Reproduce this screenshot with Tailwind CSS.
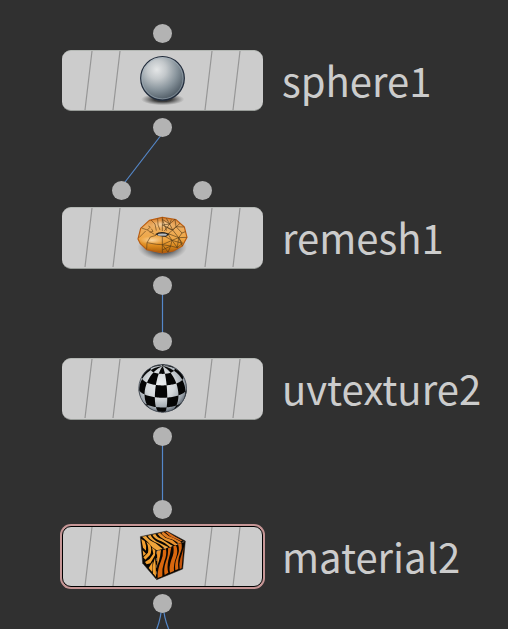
<!DOCTYPE html>
<html lang="en">
<head>
  <meta charset="UTF-8">
  <meta name="viewport" content="width=device-width, initial-scale=1.0">
  <title>Network Editor</title>
  <script src="https://cdn.jsdelivr.net/npm/@tailwindcss/browser@4"></script>
</head>
<body class="bg-[#303030] font-['Noto_Sans_CJK_SC','Noto_Sans',sans-serif] text-[#cccccc]">

  <!-- Shared node body stripes -->
  <svg class="hidden">
    <symbol id="stripes" viewBox="0 0 201 62">
      <path d="M30 1L23 60M58 1L51 60M150 1L143 60M178 1L171 60" fill="none" stroke="#969696" stroke-width="1.2"/>
    </symbol>
  </svg>

  <main class="relative min-h-screen overflow-hidden">

    <!-- Wires -->
    <svg class="absolute inset-0 h-full w-full" fill="none" stroke="#5487c9" stroke-width="1.2">
      <path d="M162 134L122 186"/>
      <path d="M162.5 285V342"/>
      <path d="M162.5 436V510"/>
      <path d="M162 604Q161 619 156 631M163 604Q164 619 169.500 631"/>
    </svg>

    <!-- sphere1 -->
    <section class="absolute left-[62px] top-[50px] flex items-start gap-[19px]">
      <span class="absolute -top-[26px] left-[91px] size-[19px] rounded-full bg-[#b3b3b3]"></span>
      <div class="relative flex h-[61px] w-[201px] justify-center rounded-[9px] border-y border-t-[#b4b8b4] border-b-[#989c98] bg-[#cccccc]">
        <svg class="absolute inset-x-0 -top-px h-[62px] w-full"><use href="#stripes"/></svg>
        <svg class="relative -top-px h-[62px] w-[65px]" viewBox="0 15 195 186">
          <defs>
            <radialGradient id="ballShade" cx=".37" cy=".3" r=".72">
              <stop offset="0" stop-color="#e4e6e7"/>
              <stop offset=".3" stop-color="#c3c8cb"/>
              <stop offset=".65" stop-color="#87939b"/>
              <stop offset="1" stop-color="#4d5963"/>
            </radialGradient>
            <radialGradient id="ballShadow">
              <stop offset=".4" stop-color="#333" stop-opacity=".95"/>
              <stop offset="1" stop-color="#555" stop-opacity="0"/>
            </radialGradient>
          </defs>
          <ellipse cx="98" cy="163" rx="65" ry="18" fill="url(#ballShadow)"/>
          <circle cx="97.500" cy="100" r="65.500" fill="url(#ballShade)" stroke="#202b3b" stroke-width="3.500"/>
          <circle cx="97.500" cy="100" r="61.500" fill="none" stroke="#a5b4c0" stroke-width="3" opacity=".5"/>
        </svg>
      </div>
      <span class="absolute -bottom-[26px] left-[91px] size-[19px] rounded-full bg-[#b3b3b3]"></span>
      <h2 class="text-[40px] leading-[60px]">sphere1</h2>
    </section>

    <!-- remesh1 -->
    <section class="absolute left-[62px] top-[207px] flex items-start gap-[19px]">
      <span class="absolute -top-[26px] left-[50px] size-[19px] rounded-full bg-[#b3b3b3]"></span>
      <span class="absolute -top-[26px] left-[131px] size-[19px] rounded-full bg-[#b3b3b3]"></span>
      <div class="relative flex h-[62px] w-[201px] justify-center rounded-[9px] border-y border-t-[#b4b8b4] border-b-[#989c98] bg-[#cccccc]">
        <svg class="absolute inset-x-0 -top-px h-[62px] w-full"><use href="#stripes"/></svg>
        <svg class="relative -top-px h-[62px] w-[65px]" viewBox="0 6 195 186">
          <defs>
            <linearGradient id="dough" x1="0" y1="0" x2="0" y2="1">
              <stop offset="0" stop-color="#d98434"/>
              <stop offset=".25" stop-color="#ecae62"/>
              <stop offset=".6" stop-color="#efa746"/>
              <stop offset=".8" stop-color="#dc8a1e"/>
              <stop offset="1" stop-color="#a85a06"/>
            </linearGradient>
            <radialGradient id="glaze">
              <stop offset="0" stop-color="#ffe9c4" stop-opacity=".75"/>
              <stop offset="1" stop-color="#ffe0b0" stop-opacity="0"/>
            </radialGradient>
            <radialGradient id="doughShadow">
              <stop offset=".5" stop-color="#505357" stop-opacity=".9"/>
              <stop offset="1" stop-color="#777" stop-opacity="0"/>
            </radialGradient>
          </defs>
          <ellipse cx="97" cy="126" rx="74" ry="40" fill="url(#doughShadow)"/>
          <path d="M24 102L32 70L58 46L97 37L138 44L163 66L171 97L157 123L130 138L97 144L50 134L31 116Z" fill="url(#dough)" stroke="#b95d12" stroke-width="3.500" stroke-linejoin="round"/>
          <ellipse cx="98" cy="58" rx="34" ry="12" fill="url(#glaze)"/>
          <ellipse cx="66" cy="106" rx="36" ry="13" fill="url(#glaze)"/>
          <!-- quads, left half -->
          <path d="M63 45L75 57L79 77M83 41L84 60L90 75M35 69L52 75L73 88M52 75L61 66L55 63M59 82L69 79L64 71M27 98L47 78M50 133L51 113L61 96L78 91M51 113L80 118L97 119" fill="none" stroke="#5a3a14" stroke-width="1.800"/>
          <!-- triangles, right half -->
          <path d="M97 37V78M97 94V144M97 43L119 57L135 43M97 60L119 57L109 40M119 57L128 75L150 55M97 43L110 77M97 60L128 75L115 86M119 57L103 78M135 43L138 65L161 66M128 75L138 65L156 84L166 80M128 75L146 98L156 84M115 86L146 98L170 97M115 89L126 106L146 98L157 123M105 94L126 106L97 119M97 119L122 123L126 106L142 128L146 98M97 135L122 123L114 142M97 119L114 141M122 123L142 128L157 115L146 98M126 106L157 115M119 57L124 44M128 75L119 72L109 66" fill="none" stroke="#543a18" stroke-width="1.900"/>
          <path d="M75 88Q87 79 104 82L119 87L108 95Q88 97 75 88Z" fill="#24211c"/>
          <ellipse cx="97" cy="89" rx="14" ry="3.500" fill="#b7bcc0"/>
        </svg>
      </div>
      <span class="absolute -bottom-[26px] left-[91px] size-[19px] rounded-full bg-[#b3b3b3]"></span>
      <h2 class="text-[40px] leading-[60px]">remesh1</h2>
    </section>

    <!-- uvtexture2 -->
    <section class="absolute left-[62px] top-[358px] flex items-start gap-[19px]">
      <span class="absolute -top-[26px] left-[91px] size-[19px] rounded-full bg-[#b3b3b3]"></span>
      <div class="relative flex h-[62px] w-[201px] justify-center rounded-[9px] border-y border-t-[#b4b8b4] border-b-[#989c98] bg-[#cccccc]">
        <svg class="absolute inset-x-0 -top-px h-[62px] w-full"><use href="#stripes"/></svg>
        <svg class="relative -top-px h-[62px] w-[65px]" viewBox="0 9 195 186">
          <defs>
            <radialGradient id="checkShade" cx=".45" cy=".42" r=".6">
              <stop offset="0" stop-color="#eceef0"/>
              <stop offset=".5" stop-color="#d3d7da"/>
              <stop offset=".85" stop-color="#9aa2aa"/>
              <stop offset="1" stop-color="#555f69"/>
            </radialGradient>
          </defs>
          <circle cx="98" cy="100" r="72" fill="url(#checkShade)"/>
          <path id="checks" fill="#050505"/>
          <circle cx="98" cy="100" r="71.500" fill="none" stroke="#3d454e" stroke-width="2.500"/>
        </svg>
      </div>
      <span class="absolute -bottom-[26px] left-[91px] size-[19px] rounded-full bg-[#b3b3b3]"></span>
      <h2 class="text-[40px] leading-[60px]">uvtexture2</h2>
    </section>

    <!-- material2 (selected) -->
    <section class="absolute left-[62px] top-[526px] flex items-start gap-[19px]">
      <span class="absolute -top-[26px] left-[91px] size-[19px] rounded-full bg-[#b3b3b3]"></span>
      <div class="relative flex h-[61px] w-[201px] justify-center rounded-[9px] border border-black bg-[#cccccc] ring-2 ring-[#c69696]">
        <svg class="absolute -left-px -top-px h-[62px] w-[201px]"><use href="#stripes"/></svg>
        <svg class="relative -top-px h-[62px] w-[65px]" viewBox="0 18 195 186">
          <path d="M31 50L110 33L166 63L158 147L80 179L38 130Z" fill="#090603" stroke="#282018" stroke-width="1.500"/>
          <!-- top face -->
          <g fill="#efa43a">
            <path d="M36 50L48 48Q58 62 77 70L98 87L80 91L67 82Q56 66 36 50Z"/>
            <path d="M53 47L62 45Q68 60 88 68L116 82L105 86Q88 70 74 66Q58 57 53 47Z"/>
            <path d="M67 44L76 42Q82 54 95 57L110 67L128 78L120 81Q105 68 94 64Q73 56 67 44Z"/>
            <path d="M82 41L90 39L106 53L128 61L143 74L134 76Q120 66 106 61Q90 53 82 41Z" fill="#e8902d"/>
            <path d="M94 38L101 36Q114 49 130 53L155 67L147 71Q131 58 118 56Q100 50 94 38Z" fill="#e17d22"/>
            <path d="M105 35L112 35L136 50L158 62L152 63Q132 54 120 49Z" fill="#d96c1c"/>
          </g>
          <!-- left face -->
          <g fill="#f3a030">
            <path d="M34 57L44 63Q50 77 48 92L39 83Z"/>
            <path d="M49 65L61 75Q67 92 60 105L46 119L40 112L54 98Q57 82 49 65Z"/>
            <path d="M38 91L48 101L40 108Z"/>
            <path d="M66 82L76 91L75 106L61 130L50 133L45 126L59 117L70 101Z"/>
            <path d="M75 114L77 134L78 171L69 160Q64 143 75 114Z"/>
            <path d="M68 125L66 155L56 144Z"/>
          </g>
          <!-- right face -->
          <g fill="#d9670e">
            <path d="M81 94L93 90Q91 108 87 122L82 137Z" fill="#f0942a"/>
            <path d="M99 91L108 87Q111 104 103 124Q95 147 97 169L83 174Q82 147 93 123Q100 107 99 91Z"/>
            <path d="M114 85L124 81Q121 101 115 121Q110 145 115 158L104 165Q100 149 107 127Q116 104 114 85Z"/>
            <path d="M130 79L138 76Q145 92 139 110Q130 133 132 153L120 158Q116 142 124 119Q134 98 130 79Z"/>
            <path d="M144 73L154 69Q158 82 151 98Q142 120 145 147L136 151Q133 132 141 112Q151 91 144 73Z"/>
            <path d="M161 80L158 110L155 145L149 147Q146 133 151 116Q157 98 161 80Z" fill="#c6540a"/>
          </g>
          <path d="M80 94V176M81 93L163 65" stroke="#f7c795" stroke-width="1.500" stroke-dasharray="9 11" fill="none"/>
        </svg>
      </div>
      <span class="absolute -bottom-[26px] left-[91px] size-[19px] rounded-full bg-[#b3b3b3]"></span>
      <h2 class="text-[40px] leading-[60px]">material2</h2>
    </section>
  </main>

  <script>
    // Checkered ball: 30 degree cells, pole tilted towards the viewer
    const rad = Math.PI / 180;
    const tilt = 23 * rad;

    function project(lat, lon) {
      const x = Math.cos(lat * rad) * Math.sin(lon * rad);
      const y = Math.sin(lat * rad);
      const z = Math.cos(lat * rad) * Math.cos(lon * rad);
      let px = x;
      let py = y * Math.cos(tilt) - z * Math.sin(tilt);
      const pz = y * Math.sin(tilt) + z * Math.cos(tilt);
      if (pz < 0) {
        // behind the rim, push it out to the edge
        const len = Math.hypot(px, py);
        px /= len;
        py /= len;
      }
      return { x: 98 + 72 * px, y: 100 - 72 * py, visible: pz > 0 };
    }

    let d = "";
    for (let row = -3; row < 3; row++) {
      for (let col = 0; col < 12; col++) {
        if ((row + col + 12) % 2) continue;
        const lat = row * 30;
        const lon = col * 30 - 19;
        const points = [];
        for (let i = 0; i < 30; i += 3) points.push(project(lat, lon + i));
        for (let i = 0; i < 30; i += 3) points.push(project(lat + i, lon + 30));
        for (let i = 0; i < 30; i += 3) points.push(project(lat + 30, lon + 30 - i));
        for (let i = 0; i < 30; i += 3) points.push(project(lat + 30 - i, lon));
        if (points.some(p => p.visible)) {
          d += "M" + points.map(p => p.x.toFixed(1) + " " + p.y.toFixed(1)).join("L") + "Z";
        }
      }
    }
    document.getElementById("checks").setAttribute("d", d);
  </script>
</body>
</html>
